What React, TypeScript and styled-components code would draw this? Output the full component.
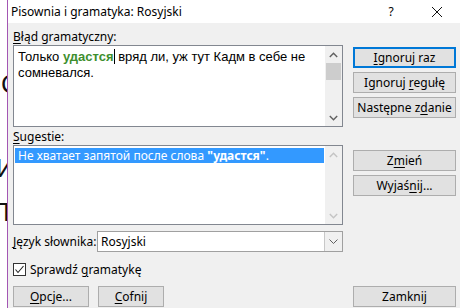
import styled, { createGlobalStyle } from "styled-components";
import type { ReactNode } from "react";

const GlobalStyle = createGlobalStyle`
  html, body {
    margin: 0;
    padding: 0;
    width: 460px;
    height: 308px;
    overflow: hidden;
    background: #ffffff;
  }
  body {
    font-family: "Noto Sans", "Open Sans", sans-serif;
    font-size: 12px;
    color: #000;
  }
`;

const UI_FONT = `"Noto Sans", "Open Sans", sans-serif`;

const App = () => {
  return (
    <>
      <GlobalStyle />
      <Page>
        <Backdrop>
          <DocLetter $top={72} $left={1}>С</DocLetter>
          <DocLetter $top={60} $left={-4}>И</DocLetter>
          <DocLetter $top={20} $left={-9}>П</DocLetter>
        </Backdrop>

        <Dialog>
          <TitleBar>
            <Title>Pisownia i gramatyka: Rosyjski</Title>
            <TitleButtons>
              <HelpMark>?</HelpMark>
              <CloseMark>
                <svg width="12" height="12" viewBox="0 0 12 12">
                  <path d="M1 1 L11 11 M11 1 L1 11" stroke="#111" strokeWidth="1" fill="none" />
                </svg>
              </CloseMark>
            </TitleButtons>
          </TitleBar>

          <Body>
            <LeftColumn>
              <Label>
                <Key>B</Key>łąd gramatyczny:
              </Label>
              <TextBox $height={82}>
                <ErrorText>
                  Только <Flagged>удастся</Flagged>
                  <Caret />
                  {" "}вряд ли, уж тут Кадм в себе не сомневался.
                </ErrorText>
                <Scrollbar>
                  <Chevron dir="up" disabled={false} />
                  <Track>
                    <Thumb />
                  </Track>
                  <Chevron dir="down" disabled={false} />
                </Scrollbar>
              </TextBox>

              <Label $gap={2}>
                <Key>S</Key>ugestie:
              </Label>
              <TextBox $height={80}>
                <SuggestList>
                  <Suggestion>
                    Не хватает запятой после слова <strong>"удастся"</strong>.
                  </Suggestion>
                </SuggestList>
                <Scrollbar>
                  <Chevron dir="up" disabled />
                  <Track />
                  <Chevron dir="down" disabled />
                </Scrollbar>
              </TextBox>

              <LanguageRow>
                <RowLabel>
                  <Key>J</Key>ęzyk słownika:
                </RowLabel>
                <Select>
                  <SelectValue>Rosyjski</SelectValue>
                  <SelectArrow>
                    <svg width="9" height="5" viewBox="0 0 9 5">
                      <polyline points="0.5,0.5 4.5,4.5 8.5,0.5" stroke="#606060" fill="none" />
                    </svg>
                  </SelectArrow>
                </Select>
              </LanguageRow>

              <CheckRow>
                <CheckBox>
                  <svg width="11" height="11" viewBox="0 0 11 11">
                    <polyline points="1.5,5.5 4,8.5 9.5,2" stroke="#222" strokeWidth="1.1" fill="none" />
                  </svg>
                </CheckBox>
                <span>
                  Sprawdź <Key>g</Key>ramatykę
                </span>
              </CheckRow>

              <BottomRow>
                <Button width={76}>
                  <Key>O</Key>pcje...
                </Button>
                <Button width={66}>
                  <Key>C</Key>ofnij
                </Button>
              </BottomRow>
            </LeftColumn>

            <RightColumn>
              <Button isDefault>
                <Key>I</Key>gnoruj raz
              </Button>
              <Button>
                Ignoruj <Key>r</Key>egułę
              </Button>
              <Button>
                Następne z<Key>d</Key>anie
              </Button>
              <Spacer $height={24} />
              <Button>
                Z<Key>m</Key>ień
              </Button>
              <Button>
                Wyjaś<Key>n</Key>ij...
              </Button>
              <PushDown />
              <Button>Zamknij</Button>
            </RightColumn>
          </Body>
        </Dialog>
      </Page>
    </>
  );
};

export default App;

const Button = ({
  children,
  width,
  isDefault,
}: {
  children: ReactNode;
  width?: number;
  isDefault?: boolean;
}) => (
  <ButtonFrame $width={width} $default={isDefault}>
    <span>{children}</span>
  </ButtonFrame>
);

const Page = styled.div`
  display: flex;
  width: 460px;
  height: 308px;
  overflow: hidden;
`;

const Backdrop = styled.div`
  width: 7px;
  flex-shrink: 0;
  overflow: hidden;
  background: #fff;
  display: flex;
  flex-direction: column;
`;

const DocLetter = styled.div<{ $top: number; $left: number }>`
  margin-top: ${(p) => p.$top}px;
  margin-left: ${(p) => p.$left}px;
  font-family: "Liberation Sans", Arial, sans-serif;
  font-size: 26px;
  line-height: 24px;
  color: #111;
`;

const Dialog = styled.div`
  flex: 1;
  display: flex;
  flex-direction: column;
  border-left: 1px solid #a356b3;
  background: #f0f0f0;
`;

const TitleBar = styled.div`
  height: 24px;
  background: #fff;
  display: flex;
  align-items: center;
  justify-content: space-between;
  padding-left: 3px;
`;

const Title = styled.div`
  font-family: ${UI_FONT};
  font-size: 12px;
`;

const TitleButtons = styled.div`
  display: flex;
  align-items: center;
  height: 100%;
`;

const HelpMark = styled.div`
  width: 46px;
  text-align: center;
  font-size: 12px;
`;

const CloseMark = styled.div`
  width: 46px;
  display: flex;
  justify-content: center;
  align-items: center;
`;

const Body = styled.div`
  flex: 1;
  display: flex;
  padding: 0 4px 1px 5px;
  gap: 10px;
`;

const LeftColumn = styled.div`
  width: 330px;
  display: flex;
  flex-direction: column;
  padding-top: 6px;
`;

const RightColumn = styled.div`
  flex: 1;
  display: flex;
  flex-direction: column;
  gap: 4px;
  padding-top: 24px;
`;

const Spacer = styled.div<{ $height: number }>`
  height: ${(p) => p.$height}px;
`;

const PushDown = styled.div`
  flex: 1;
`;

const Label = styled.div<{ $gap?: number }>`
  height: 16px;
  line-height: 16px;
  margin-top: ${(p) => p.$gap ?? 0}px;
`;

const Key = styled.u`
  text-decoration: underline;
  text-underline-offset: 2px;
`;

const TextBox = styled.div<{ $height: number }>`
  height: ${(p) => p.$height}px;
  box-sizing: border-box;
  border: 1px solid #828790;
  background: #fff;
  display: flex;
`;

const ErrorText = styled.div`
  flex: 1;
  padding: 3px 4px;
  font-family: "Liberation Sans", Arial, sans-serif;
  font-size: 13px;
  line-height: 16px;
  color: #000;
`;

const Flagged = styled.span`
  color: #3e8f2f;
  font-weight: bold;
`;

const Caret = styled.span`
  display: inline-block;
  width: 1px;
  height: 15px;
  background: #000;
  vertical-align: -3px;
`;

const SuggestList = styled.div`
  flex: 1;
  padding: 2px 1px;
`;

const Suggestion = styled.div`
  background: #3399ff;
  color: #fff;
  height: 15px;
  line-height: 15px;
  padding-left: 3px;
  font-size: 12px;
  font-family: ${UI_FONT};
`;

const Scrollbar = styled.div`
  width: 17px;
  background: #f0f0f0;
  display: flex;
  flex-direction: column;
`;

const Track = styled.div`
  flex: 1;
  padding: 0 1px;
`;

const Thumb = styled.div`
  height: 17px;
  background: #cdcdcd;
`;

const ArrowBox = styled.div`
  height: 17px;
  display: flex;
  align-items: center;
  justify-content: center;
`;

const Chevron = ({ dir, disabled }: { dir: "up" | "down"; disabled: boolean }) => (
  <ArrowBox>
    <svg width="9" height="6" viewBox="0 0 9 6">
      <polyline
        points={dir === "up" ? "0.8,5 4.5,1.2 8.2,5" : "0.8,1 4.5,4.8 8.2,1"}
        stroke={disabled ? "#c4c4c4" : "#606060"}
        strokeWidth="1.4"
        fill="none"
      />
    </svg>
  </ArrowBox>
);

const LanguageRow = styled.div`
  display: flex;
  align-items: center;
  margin-top: 6px;
  height: 21px;
`;

const RowLabel = styled.div`
  width: 84px;
`;

const Select = styled.div`
  flex: 1;
  height: 21px;
  box-sizing: border-box;
  border: 1px solid #a0a0a0;
  background: #fff;
  display: flex;
`;

const SelectValue = styled.div`
  flex: 1;
  padding-left: 3px;
  line-height: 19px;
`;

const SelectArrow = styled.div`
  width: 17px;
  border-left: 1px solid #c8c8c8;
  background: #f0f0f0;
  display: flex;
  align-items: center;
  justify-content: center;
`;

const CheckRow = styled.div`
  display: flex;
  align-items: center;
  gap: 4px;
  margin-top: 11px;
  height: 13px;
`;

const CheckBox = styled.div`
  width: 13px;
  height: 13px;
  box-sizing: border-box;
  border: 1px solid #333;
  background: #fff;
  display: flex;
  align-items: center;
  justify-content: center;
`;

const BottomRow = styled.div`
  display: flex;
  gap: 9px;
  margin-top: 10px;
`;

const ButtonFrame = styled.div<{ $width?: number; $default?: boolean }>`
  width: ${(p) => (p.$width ? `${p.$width}px` : "auto")};
  height: 21px;
  box-sizing: border-box;
  flex-shrink: 0;
  border: ${(p) => (p.$default ? "2px solid #0078d7" : "1px solid #adadad")};
  background: #e1e1e1;
  display: flex;
  align-items: center;
  justify-content: center;
  font-family: ${UI_FONT};
  font-size: 12px;
`;
